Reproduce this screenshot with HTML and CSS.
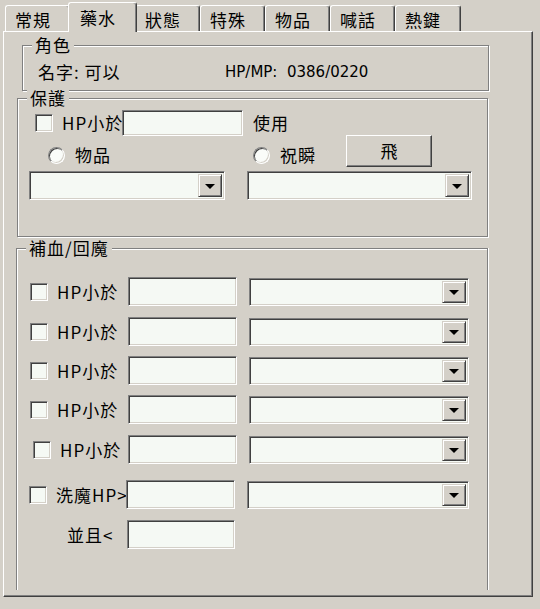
FILE: index.html
```html
<!DOCTYPE html>
<html lang="zh-Hant">
<head>
<meta charset="utf-8">
<title>藥水</title>
<link rel="stylesheet" href="styles.css">
</head>
<body>
<div class="tabs">
  <div class="tab">常規</div>
  <div class="tab active">藥水</div>
  <div class="tab">狀態</div>
  <div class="tab">特殊</div>
  <div class="tab">物品</div>
  <div class="tab">喊話</div>
  <div class="tab last">熱鍵</div>
</div>
<div class="page">
  <div class="group g-role">
    <div class="legend">角色</div>
    <div class="role-line">
      <span class="name">名字: 可以</span>
      <span class="hpmp">HP/MP:&nbsp; 0386/0220</span>
    </div>
  </div>

  <div class="group g-protect">
    <div class="legend">保護</div>
    <div class="prow prow-a">
      <span class="check pa-check"></span>
      <span class="lbl pa-lbl">HP小於</span>
      <span class="field pa-field"></span>
      <span class="lbl pa-use">使用</span>
    </div>
    <div class="prow prow-b">
      <span class="radio pb-r1"></span>
      <span class="lbl pb-l1">物品</span>
      <span class="radio"></span>
      <span class="lbl pb-l2">祝瞬</span>
      <span class="button">飛</span>
    </div>
    <div class="prow prow-c">
      <span class="combo pc-c1"><span class="drop"></span></span>
      <span class="combo pc-c2"><span class="drop"></span></span>
    </div>
  </div>

  <div class="group g-heal">
    <div class="legend">補血/回魔</div>
    <div class="hrow r1">
      <span class="check"></span><span class="lbl hl">HP小於</span>
      <span class="field hf"></span><span class="combo hc"><span class="drop"></span></span>
    </div>
    <div class="hrow r2">
      <span class="check"></span><span class="lbl hl">HP小於</span>
      <span class="field hf"></span><span class="combo hc"><span class="drop"></span></span>
    </div>
    <div class="hrow r3">
      <span class="check"></span><span class="lbl hl">HP小於</span>
      <span class="field hf"></span><span class="combo hc"><span class="drop"></span></span>
    </div>
    <div class="hrow r4">
      <span class="check"></span><span class="lbl hl">HP小於</span>
      <span class="field hf"></span><span class="combo hc"><span class="drop"></span></span>
    </div>
    <div class="hrow r5">
      <span class="check"></span><span class="lbl hl">HP小於</span>
      <span class="field hf"></span><span class="combo hc"><span class="drop"></span></span>
    </div>
    <div class="hrow r6">
      <span class="check"></span><span class="lbl hl">洗魔HP&gt;</span>
      <span class="field hf"></span><span class="combo hc"><span class="drop"></span></span>
    </div>
    <div class="hrow r7">
      <span class="lbl hl">並且&lt;</span>
      <span class="field hf"></span>
    </div>
  </div>
</div>
</body>
</html>
```
FILE: styles.css
```css
* { box-sizing: border-box; margin: 0; padding: 0; }
html, body { width: 540px; height: 609px; background: #d4d0c8; overflow: hidden; }
body {
  font-family: "Noto Sans CJK TC", "Noto Sans CJK SC", sans-serif;
  font-size: 17px;
  line-height: 20px;
  color: #000;
  letter-spacing: 1px;
}

/* tabs */
.tabs { display: flex; align-items: flex-end; height: 31px; padding-left: 5px; }
.tab {
  flex: none;
  width: 65px; height: 26px;
  padding: 4px 0 0 9px;
  border-top: 1px solid #fff;
  border-left: 1px solid #fff;
  border-right: 1px solid #404040;
  box-shadow: inset -1px 0 #808080;
  border-radius: 3px 3px 0 0;
  background: #d4d0c8;
  white-space: nowrap;
}
.tab.active {
  position: relative; z-index: 1;
  width: 69px; height: 30px;
  margin: 0 -2px -1px;
  padding: 5px 0 0 11px;
}
.tab.last { width: 66px; }

/* page */
.page {
  margin-left: 3px;
  width: 530px; height: 566px;
  border: 1px solid;
  border-color: #fff #404040 #404040 #fff;
  box-shadow: inset -1px -1px #808080;
  overflow: hidden;
}

/* group boxes */
.group { border: 1px solid #808080; box-shadow: inset 1px 1px #fff, 1px 1px #fff; }
.legend {
  width: fit-content; height: 20px;
  margin: -11px 0 0 9px; padding: 0 3px;
  background: #d4d0c8;
  white-space: nowrap;
}
.g-role { width: 467px; height: 46px; margin: 13px 0 0 18px; }
.g-protect { width: 471px; height: 139px; margin: 7px 0 0 13px; }
.g-heal {
  width: 472px; height: 342px; margin: 11px 0 0 12px;
  border-bottom: none;
  box-shadow: inset 1px 0 #fff, inset 0 1px #fff, 1px 0 #fff;
}

.role-line { display: flex; margin-top: 7px; height: 20px; }
.name { flex: none; width: 187px; margin-left: 15px; }
.hpmp { font-family: "DejaVu Sans", sans-serif; font-size: 15px; letter-spacing: 0; white-space: pre; }

/* controls */
.lbl { flex: none; white-space: nowrap; }
.check, .field, .combo {
  flex: none;
  border: 1px solid;
  border-color: #808080 #fff #fff #808080;
  box-shadow: inset 1px 1px #404040, inset -1px -1px #d4d0c8;
  background: #f5f9f4;
}
.check { width: 18px; height: 18px; }
.radio {
  flex: none;
  width: 17px; height: 17px;
  border-radius: 50%;
  border: 1px solid;
  border-color: #808080 #fff #fff #808080;
  box-shadow: inset 1px 1px #404040, inset -1px -1px #d4d0c8;
  background: #fafcf9;
  margin-top: 8px;
}
.combo { height: 28px; padding: 2px; display: flex; justify-content: flex-end; }
.drop {
  width: 24px; height: 100%;
  border: 1px solid;
  border-color: #d4d0c8 #404040 #404040 #d4d0c8;
  box-shadow: inset 1px 1px #fff, inset -1px -1px #808080;
  background: #d4d0c8;
  display: flex; align-items: center; justify-content: center;
}
.drop::after {
  content: "";
  border-left: 5px solid transparent;
  border-right: 5px solid transparent;
  border-top: 5px solid #000;
  margin-top: 1px;
}
.button {
  flex: none;
  width: 86px; height: 32px;
  border: 1px solid;
  border-color: #fff #404040 #404040 #fff;
  box-shadow: inset -1px -1px #808080;
  display: flex; align-items: center; justify-content: center;
  letter-spacing: 0;
}

/* protect rows */
.prow { display: flex; align-items: center; }
.prow-a { height: 26px; margin-top: 2px; }
.pa-check { margin-left: 17px; }
.pa-lbl { width: 60px; margin-left: 9px; }
.pa-field { width: 121px; height: 26px; }
.pa-use { margin-left: 10px; }
.prow-b { height: 32px; margin-top: -1px; }
.prow-b .lbl { margin-top: 8px; }
.pb-r1 { margin-left: 30px; }
.pb-l1 { width: 178px; margin-left: 10px; }
.pb-l2 { width: 66px; margin-left: 10px; }
.prow-c { height: 29px; margin-top: 4px; }
.pc-c1 { width: 196px; height: 29px; margin-left: 11px; }
.pc-c2 { width: 225px; height: 29px; margin-left: 22px; }

/* heal rows */
.hrow { display: flex; align-items: center; height: 29px; }
.hrow .check { margin-left: 13px; }
.hl { width: 71px; margin-left: 9px; }
.hf { width: 109px; height: 29px; }
.hc { width: 220px; margin-left: 12px; }
.r1 { margin-top: 19px; }
.r2 { margin-top: 11px; }
.r3 { margin-top: 10px; }
.r4 { margin-top: 10px; }
.r5 { margin-top: 11px; }
.r5 .check { margin-left: 16px; }
.r5 .hl { width: 68px; }
.r6 { margin-top: 16px; }
.r6 .check { margin-left: 12px; }
.r6 .hl { width: 70px; }
.r6 .hc { width: 222px; }
.r7 { margin-top: 11px; }
.r7 .hl { width: 60px; margin-left: 50px; }
.r7 .hf { width: 108px; }
```
